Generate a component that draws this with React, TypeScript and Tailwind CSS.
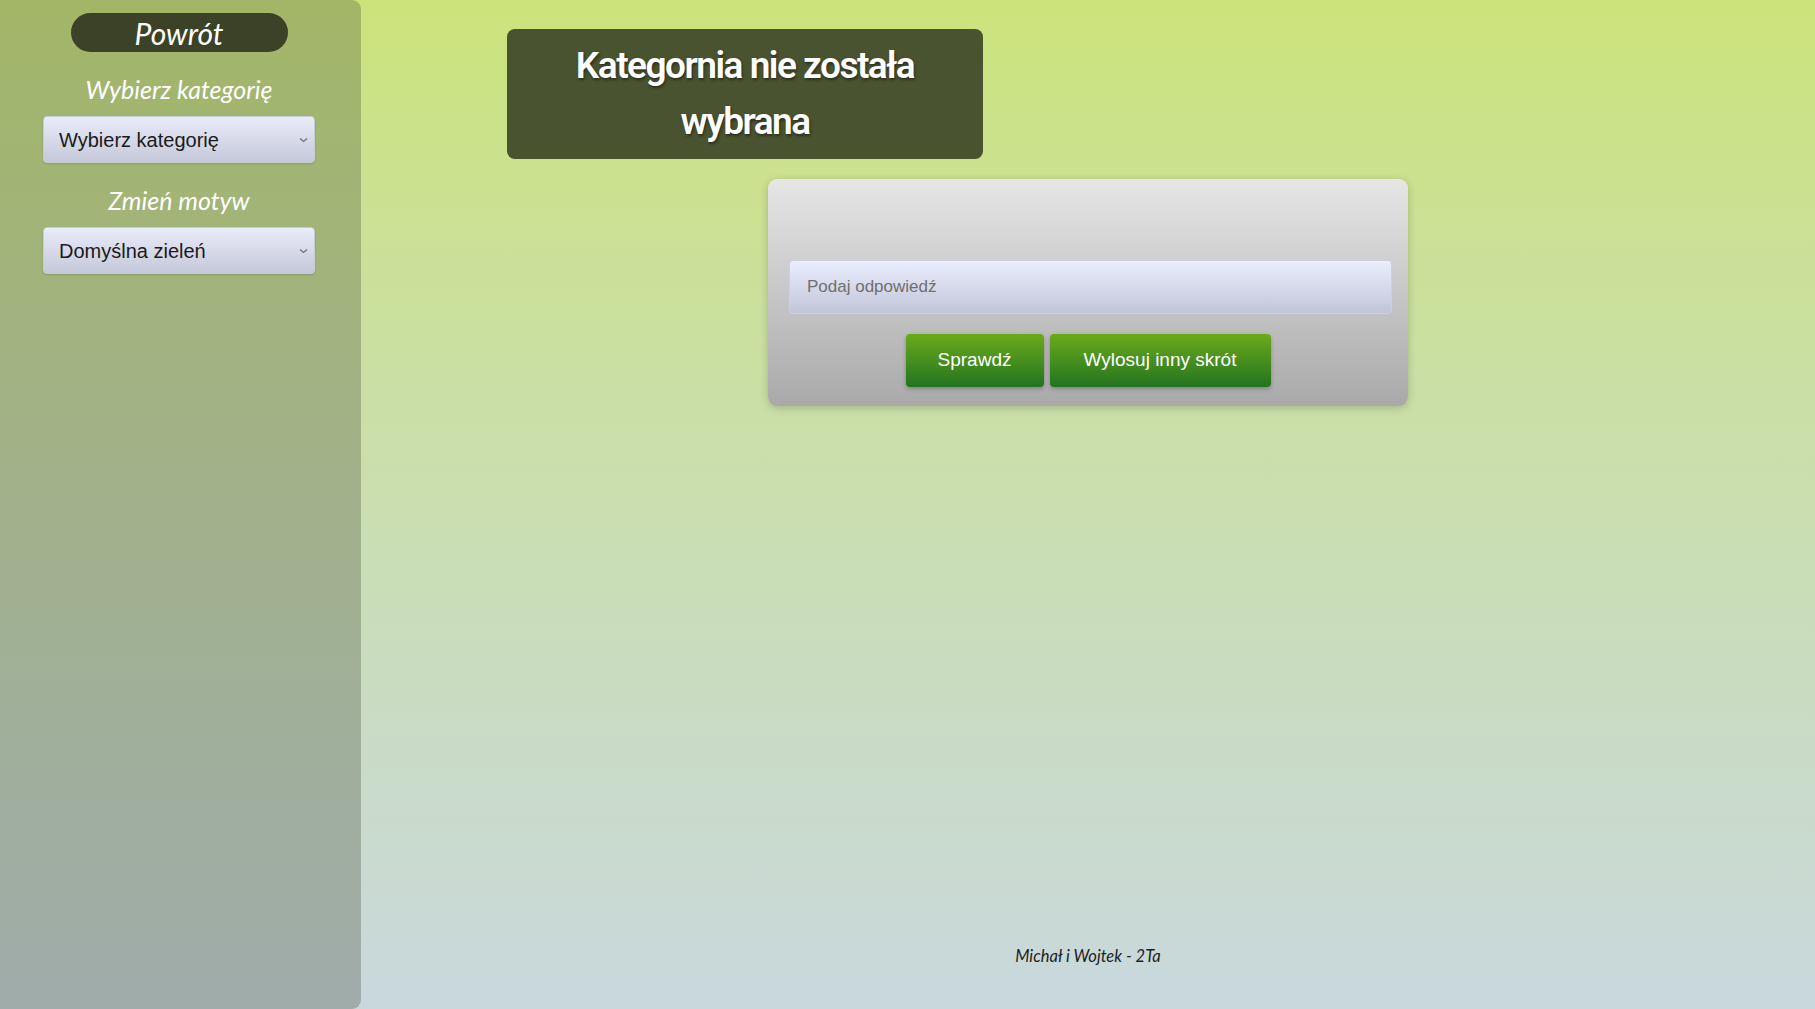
import React from "react";

const Chevron = () => (
  <svg className="pointer-events-none absolute right-[7px] top-1/2 -translate-y-1/2" width="9" height="6" viewBox="0 0 9 6" fill="none">
    <path d="M1 1.5 L4.5 4.5 L8 1.5" stroke="#6b6b6b" strokeWidth="1.1" />
  </svg>
);

function Select({ value }: { value: string }) {
  return (
    <div className="relative w-[272px] h-[47px]">
      <div className="w-full h-full rounded-[4px] border border-[#c9cbd3] bg-gradient-to-b from-[#eaecfb] to-[#c5c8d9] pl-[15px] flex items-center text-[20px] text-[#1a1a1a] shadow-[0_1px_2px_rgba(0,0,0,0.15)]" style={{ fontFamily: '"Liberation Sans", Arial, sans-serif' }}>
        {value}
      </div>
      <Chevron />
    </div>
  );
}

export default function App() {
  const jos = { fontFamily: 'Lato, "Noto Sans", sans-serif' };
  const arial = { fontFamily: '"Liberation Sans", Arial, sans-serif' };
  return (
    <div className="w-full min-h-screen h-[1009px] flex bg-gradient-to-b from-[#cce37b] to-[#c9d8dd]">
      <aside className="w-[361px] h-full rounded-r-[9px] bg-gradient-to-b from-[#a3b667] to-[#a0acab] flex flex-col items-center pr-[3px]">
        <button className="mt-[13px] w-[217px] h-[39px] rounded-full bg-[#3c4227] text-white text-[30px] italic leading-none flex items-center justify-center" style={jos}>
          Powrót
        </button>
        <div className="mt-[21px] h-[32px] leading-[32px] text-[25px] italic text-white" style={jos}>
          Wybierz kategorię
        </div>
        <div className="mt-[11px]">
          <Select value="Wybierz kategorię" />
        </div>
        <div className="mt-[21px] h-[32px] leading-[32px] text-[25px] italic text-white" style={jos}>
          Zmień motyw
        </div>
        <div className="mt-[11px]">
          <Select value="Domyślna zieleń" />
        </div>
      </aside>
      <main className="flex-1 flex flex-col h-full">
        <div className="mt-[29px] ml-[146px] w-[476px] h-[130px] rounded-[8px] bg-[#4a5330] flex items-center justify-center px-[24px]">
          <h1 className="text-white text-center text-[37px] font-semibold leading-[56px] tracking-[-1.5px] [text-shadow:1px_2px_3px_rgba(0,0,0,0.45)]" style={{ fontFamily: 'Roboto, "Open Sans", sans-serif' }}>
            Kategornia nie została wybrana
          </h1>
        </div>
        <div className="mt-[20px] mx-auto w-[640px] rounded-[9px] bg-gradient-to-b from-[#e6e6e6] to-[#a9a9a9] shadow-[0_2px_8px_rgba(0,0,0,0.2)] pt-[81px] px-[16px] pb-[19px]">
          <div className="pl-[5px]">
            <input
              placeholder="Podaj odpowiedź"
              className="w-full h-[54px] rounded-[4px] border border-[#cfd1d8] bg-gradient-to-b from-[#eceefe] to-[#c1c5d8] pl-[17px] text-[17px] text-[#333] placeholder:text-[#6f6f6f] outline-none"
              style={arial}
            />
          </div>
          <div className="mt-[20px] flex justify-center gap-[6px]">
            <button className="w-[138px] h-[53px] rounded-[4px] bg-gradient-to-b from-[#6aab1a] to-[#20741f] text-white text-[19px] shadow-[0_2px_4px_rgba(0,0,0,0.25)]" style={arial}>
              Sprawdź
            </button>
            <button className="w-[221px] h-[53px] rounded-[4px] bg-gradient-to-b from-[#6aab1a] to-[#20741f] text-white text-[19px] shadow-[0_2px_4px_rgba(0,0,0,0.25)]" style={arial}>
              Wylosuj inny skrót
            </button>
          </div>
        </div>
        <footer className="mt-auto mb-[43px] text-center text-[16.5px] italic text-[#1e1e1e] h-[20px] leading-[20px]" style={jos}>
          Michał i Wojtek - 2Ta
        </footer>
      </main>
    </div>
  );
}
